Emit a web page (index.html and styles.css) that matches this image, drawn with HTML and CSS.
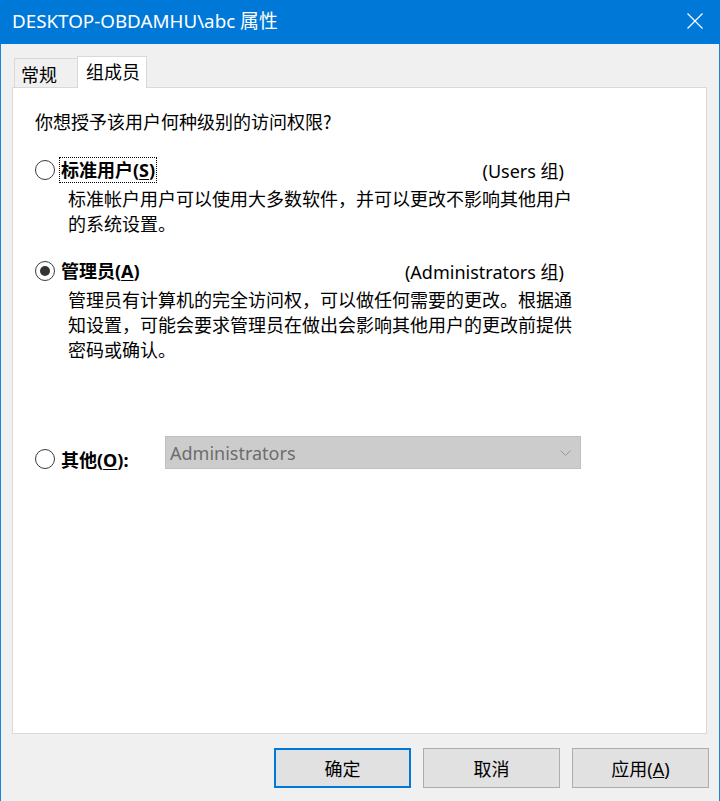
FILE: index.html
```html
<!DOCTYPE html>
<html lang="zh-CN">
<head>
<meta charset="utf-8">
<title>DESKTOP-OBDAMHU\abc 属性</title>
<link rel="stylesheet" href="styles.css">
</head>
<body>
<div class="window">
  <div class="titlebar">
    <span class="title">DESKTOP-OBDAMHU\abc 属性</span>
    <span class="close">
      <svg width="16" height="16" viewBox="0 0 16 16"><path d="M0.5 0.5 L15.5 15.5 M15.5 0.5 L0.5 15.5" stroke="#ffffff" stroke-width="1.2" fill="none"/></svg>
    </span>
  </div>
  <div class="tabs">
    <div class="tab">常规</div>
    <div class="tab active">组成员</div>
  </div>
  <div class="panel">
    <p class="question">你想授予该用户何种级别的访问权限?</p>

    <div class="option">
      <div class="option-head">
        <span class="radio"></span>
        <span class="label focus">标准用户(<u>S</u>)</span>
        <span class="group">(Users 组)</span>
      </div>
      <p class="desc">标准帐户用户可以使用大多数软件，并可以更改不影响其他用户的系统设置。</p>
    </div>

    <div class="option admin">
      <div class="option-head">
        <span class="radio checked"></span>
        <span class="label">管理员(<u>A</u>)</span>
        <span class="group">(Administrators 组)</span>
      </div>
      <p class="desc">管理员有计算机的完全访问权，可以做任何需要的更改。根据通知设置，可能会要求管理员在做出会影响其他用户的更改前提供密码或确认。</p>
    </div>

    <div class="option-head other">
      <span class="radio"></span>
      <span class="label">其他(<u>O</u>):</span>
      <div class="select">
        <span class="select-text">Administrators</span>
        <svg class="chev" width="11" height="6" viewBox="0 0 11 6"><path d="M0.5 0.5 L5.5 5.5 L10.5 0.5" stroke="#9a9a9a" stroke-width="1" fill="none"/></svg>
      </div>
    </div>
  </div>
  <div class="buttons">
    <button class="btn default">确定</button>
    <button class="btn">取消</button>
    <button class="btn">应用(<u>A</u>)</button>
  </div>
</div>
</body>
</html>
```

FILE: styles.css
```css
* { box-sizing: border-box; }
html, body { margin: 0; padding: 0; }
body {
  font-family: "Noto Sans", "Noto Sans CJK SC", sans-serif;
  font-size: 18px;
  color: #000;
  background: #f0f0f0;
}
.window {
  width: 720px;
  height: 801px;
  display: flex;
  flex-direction: column;
  background: #f0f0f0;
  border-left: 1px solid #1883d7;
  border-right: 1px solid #1883d7;
}
.titlebar {
  height: 44px;
  flex: none;
  background: #0078d7;
  color: #fff;
  display: flex;
  align-items: center;
  padding: 0 17px 0 12px;
  margin: 0 -1px;
}
.title {
  font-size: 18.8px;
  flex: 1;
  line-height: 24px;
  padding-bottom: 2px;
}
.close { display: flex; padding-bottom: 2px; }
.tabs {
  height: 43px;
  flex: none;
  display: flex;
  align-items: flex-end;
  padding-left: 13px;
  position: relative;
  z-index: 1;
}
.tab {
  height: 29px;
  padding: 0 6px 0 6px;
  width: 64px;
  border: 1px solid #d9d9d9;
  border-bottom: none;
  background: #f0f0f0;
  font-family: "Noto Sans CJK SC", sans-serif;
  font-size: 18px;
  line-height: 30px;
}
.tab.active {
  height: 32px;
  width: 70px;
  margin-bottom: -1px;
  margin-left: -1px;
  padding-left: 8px;
  background: #fff;
  line-height: 28px;
}
.panel {
  flex: 1;
  margin: 0 12px 0 11px;
  background: #fff;
  border: 1px solid #d9d9d9;
  padding: 21px 125px 0 22px;
}
.question {
  margin: 0;
  line-height: 24px;
  font-family: "Noto Sans CJK SC", sans-serif;
}
.option { margin-top: 24px; }
.option.admin { margin-top: 22px; }
.option-head {
  display: flex;
  align-items: center;
  height: 26px;
}
.radio {
  width: 20px;
  height: 20px;
  border: 1.5px solid #3a3a3a;
  border-radius: 50%;
  background: #fff;
  flex: none;
  display: flex;
  align-items: center;
  justify-content: center;
}
.radio.checked::after {
  content: "";
  width: 10px;
  height: 10px;
  border-radius: 50%;
  background: #333;
}
.label {
  font-weight: bold;
  margin-left: 4px;
  padding: 0 1px;
  line-height: 24px;
  border: 1px solid transparent;
  font-family: "Noto Sans", "Noto Sans CJK SC", sans-serif;
}
.label.focus { border: 1px dotted #000; }
.label u { text-underline-offset: 2px; }
.group {
  margin-left: auto;
  margin-right: 17px;
}
.desc {
  margin: 3px 0 0 33px;
  width: 512px;
  line-height: 25px;
  font-family: "Noto Sans CJK SC", sans-serif;
}
.option-head.other {
  margin-top: 74px;
  height: 33px;
}
.other .radio { align-self: flex-end; }
.other .label { align-self: flex-end; margin-bottom: -4px; }
.select {
  margin-left: auto;
  width: 416px;
  height: 33px;
  background: #cccccc;
  border: 1px solid #bfbfbf;
  display: flex;
  align-items: center;
  padding: 0 9px 0 4px;
}
.select-text {
  flex: 1;
  color: #6d6d6d;
  font-size: 18px;
}
.chev { margin-top: 1px; }
.buttons {
  flex: none;
  display: flex;
  justify-content: flex-end;
  gap: 12px;
  padding: 14px 10px 13px 0;
}
.btn {
  width: 137px;
  height: 40px;
  background: #e1e1e1;
  border: 1px solid #adadad;
  font-family: "Noto Sans", "Noto Sans CJK SC", sans-serif;
  font-size: 18px;
  color: #000;
  padding: 0;
}
.btn.default { border: 2px solid #0078d7; }
```
